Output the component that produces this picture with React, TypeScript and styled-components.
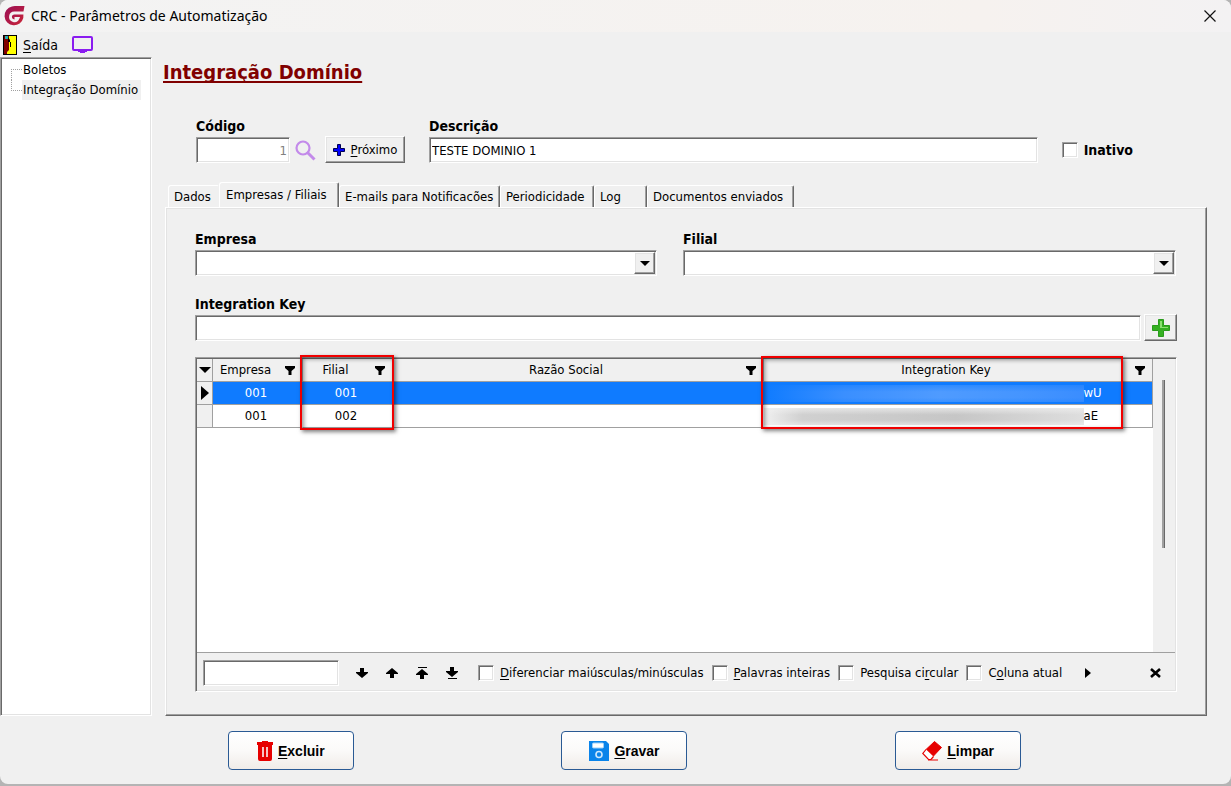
import React, { useId } from "react";
import styled, { createGlobalStyle, css } from "styled-components";

const GlobalStyle = createGlobalStyle`
  * { box-sizing: border-box; }
  html, body, #root { height: 100%; }
  body {
    margin: 0;
    background: #b4b4b4;
    color: #000;
    font-family: "DejaVu Sans Condensed", "DejaVu Sans", sans-serif;
    font-size: 13px;
    line-height: 20px;
  }
  input, button, select { font: inherit; color: inherit; margin: 0; }
  u { text-underline-offset: 2px; text-decoration-thickness: 1px; }
`;

const sunken = css`
  border: 1px solid;
  border-color: #a0a0a0 #fff #fff #a0a0a0;
  box-shadow: inset 1px 1px #696969, inset -1px -1px #e3e3e3;
`;

const raised = css`
  border: 1px solid;
  border-color: #fff #696969 #696969 #fff;
  box-shadow: inset -1px -1px #a0a0a0, inset 1px 1px #e3e3e3;
`;

const Desktop = styled.div`
  min-height: 100%;
  padding-bottom: 2px;
  display: flex;
  flex-direction: column;
`;

const Window = styled.div`
  flex: 1;
  display: flex;
  flex-direction: column;
  background: #f0f0f0;
  border-radius: 8px;
  overflow: hidden;
`;

const TitleBar = styled.header`
  display: flex;
  align-items: center;
  gap: 6px;
  height: 32px;
  padding: 0 15px 0 4px;
  background: linear-gradient(90deg, #f3f3f3, #f6f2ef 80%, #f3f2f3);
  font-family: "Noto Sans", sans-serif;
  font-size: 14px;
`;

const WindowTitle = styled.span`
  flex: 1;
`;

const PlainButton = styled.button`
  display: flex;
  align-items: center;
  justify-content: center;
  gap: 6px;
  padding: 0;
  border: 0;
  background: none;
`;

const MenuBar = styled.nav`
  display: flex;
  align-items: center;
  gap: 14px;
  height: 25px;
  padding: 0 3px;
  font-size: 14px;
`;

const Body = styled.div`
  flex: 1;
  display: flex;
`;

const Tree = styled.ul`
  ${sunken}
  width: 152px;
  margin: 0;
  padding: 2px 0 0 10px;
  list-style: none;
  background: #fff;
`;

const TreeItem = styled.li<{ $last?: boolean }>`
  display: flex;
  height: 20px;
  white-space: nowrap;
  &::before {
    content: "";
    width: 10px;
    height: 10px;
    border: 0 dotted #a0a0a0;
    border-left-width: 1px;
    ${(p) =>
      p.$last
        ? "border-bottom-width: 1px;"
        : "border-top-width: 1px; align-self: flex-end;"}
  }
`;

const TreeLabel = styled.span<{ $selected?: boolean }>`
  padding: 0 3px 0 1px;
  background: ${(p) => (p.$selected ? "#f0f0f0" : "none")};
`;

const Main = styled.main`
  flex: 1;
  min-width: 0;
  display: flex;
  flex-direction: column;
  padding: 0 24px 0 13px;
`;

const Heading = styled.h1`
  margin: 3px 0 0 -2px;
  color: #800000;
  font-size: 20px;
  line-height: 24px;
  text-decoration: underline;
  text-decoration-thickness: 2px;
  text-underline-offset: 2px;
  text-decoration-skip-ink: none;
`;

const RecordRow = styled.div`
  display: flex;
  align-items: flex-end;
  margin-top: 32px;
  padding: 0 74px 0 31px;
`;

const Field = styled.div`
  flex: 1;
  display: flex;
  flex-direction: column;
  gap: 1px;
  min-width: 0;
`;

const CodeField = styled(Field)`
  flex: 0 0 94px;
`;

const DescriptionField = styled(Field)`
  margin: 0 24px;
`;

const Label = styled.label`
  font-size: 14px;
  font-weight: bold;
`;

const TextBox = styled.input<{ $right?: boolean }>`
  ${sunken}
  width: 100%;
  height: 26px;
  padding: 0 2px;
  border-radius: 0;
  background: #fff;
  outline: 0;
  text-align: ${(p) => (p.$right ? "right" : "left")};
  color: ${(p) => (p.$right ? "#808080" : "#000")};
`;

const SearchButton = styled(PlainButton)`
  height: 26px;
  margin: 0 9px 0 5px;
`;

const BevelButton = styled.button<{ $width: number }>`
  ${raised}
  display: flex;
  align-items: center;
  justify-content: center;
  gap: 6px;
  width: ${(p) => p.$width}px;
  height: 27px;
  padding: 0;
  background: #f0f0f0;
`;

const CheckLabel = styled.label`
  display: flex;
  align-items: center;
  gap: 6px;
  white-space: nowrap;
`;

const InactiveLabel = styled(CheckLabel)`
  padding-bottom: 3px;
  font-size: 14px;
  font-weight: bold;
`;

const CheckBox = styled.input.attrs({ type: "checkbox" })`
  ${sunken}
  appearance: none;
  width: 16px;
  height: 16px;
  background: #fff;
`;

const TabStrip = styled.div`
  display: flex;
  align-items: flex-end;
  height: 26px;
  margin-top: 18px;
  padding-left: 3px;
`;

const Tab = styled.button<{ $width: number; $active?: boolean; $flat?: boolean }>`
  width: ${(p) => p.$width}px;
  height: ${(p) => (p.$active ? 25 : 22)}px;
  padding: 0 0 0 ${(p) => (p.$active ? 6 : 5)}px;
  border: 1px solid;
  border-color: #fff ${(p) => (p.$flat ? "#f0f0f0" : "#696969")} transparent #fff;
  border-bottom: 0;
  border-radius: 3px 2px 0 0;
  box-shadow: ${(p) => (p.$flat ? "none" : "inset -1px 0 #a0a0a0")};
  background: #f0f0f0;
  text-align: left;
  white-space: nowrap;
`;

const Panel = styled.section`
  ${raised}
  flex: 1;
  display: flex;
  flex-direction: column;
  padding: 21px 29px 23px 29px;
`;

const FieldPair = styled.div`
  display: grid;
  grid-template-columns: 462fr 493fr;
  gap: 26px;
  padding-right: 1px;
`;

const Combo = styled.div`
  ${sunken}
  display: grid;
  height: 26px;
  padding: 1px;
  background: #fff;
`;

const ComboSelect = styled.select`
  grid-area: 1 / 1;
  appearance: none;
  width: 100%;
  padding: 0 24px 0 2px;
  border: 0;
  outline: 0;
  background: none;
`;

const ComboArrow = styled.span`
  ${raised}
  grid-area: 1 / 1;
  justify-self: end;
  display: flex;
  align-items: center;
  justify-content: center;
  width: 21px;
  background: #f0f0f0;
  pointer-events: none;
`;

const KeyRow = styled.div`
  display: flex;
  align-items: flex-end;
  gap: 3px;
  margin-top: 18px;
`;

const GridBox = styled.div`
  ${sunken}
  flex: 1;
  display: flex;
  flex-direction: column;
  margin-top: 16px;
  padding: 1px;
`;

const GridBody = styled.div`
  flex: 1;
  display: flex;
`;

const GridArea = styled.div`
  flex: 1;
  min-width: 0;
  background: #fff;
`;

const ScrollTrack = styled.div`
  width: 22px;
  padding: 21px 0 0 9px;
`;

const ScrollThumb = styled.div`
  width: 3px;
  height: 168px;
  border-right: 1px solid #696969;
  background: #a0a0a0;
`;

const Table = styled.table`
  width: 100%;
  table-layout: fixed;
  border-collapse: separate;
  border-spacing: 0;
`;

const HeadCell = styled.th<{ $width?: number }>`
  position: relative;
  ${(p) => p.$width && `width: ${p.$width}px;`}
  height: 23px;
  padding: 0;
  border-right: 1px solid #a0a0a0;
  border-bottom: 1px solid #a0a0a0;
  background: #f0f0f0;
  font-weight: normal;
`;

const MarkerHeadCell = styled(HeadCell)`
  width: 16px;
  & > svg { display: block; margin: 0 auto; }
`;

const HeadContent = styled.div`
  display: flex;
  align-items: center;
  padding-right: 7px;
`;

const HeadText = styled.span`
  flex: 1;
  padding-right: 7px;
  text-align: center;
`;

const Row = styled.tr<{ $selected?: boolean }>`
  background: ${(p) => (p.$selected ? "#0f7bff" : "#fff")};
  color: ${(p) => (p.$selected ? "#fff" : "#000")};
`;

const Cell = styled.td`
  height: 23px;
  padding: 0 3px 0 0;
  border-bottom: 1px solid #a0a0a0;
  border-right: 1px solid transparent;
  text-align: center;
  &:last-child { border-right-color: #a0a0a0; }
`;

const MarkerCell = styled(Cell)`
  padding: 0;
  border-right-color: #a0a0a0;
  background: #f0f0f0;
  & > svg { display: block; margin: 0 auto; }
`;

const KeyValue = styled.div`
  display: flex;
  align-items: center;
`;

const Redaction = styled.span<{ $light?: boolean }>`
  width: 83%;
  height: 17px;
  background: ${(p) =>
    p.$light
      ? "linear-gradient(rgba(15,123,255,0.5), transparent 40% 75%, rgba(15,123,255,0.3)), linear-gradient(90deg, #0f7bff, #3a8fff 25%, #4f9bff 55%, #4595ff 80%, #3a8dff)"
      : "linear-gradient(rgba(240,240,240,0.7), transparent 40% 70%, rgba(240,240,240,0.6)), linear-gradient(90deg, #f0f0f0, #d0d0d0 12%, #c6c6c6 60%, #dedede)"};
`;

const Highlight = styled.span<{ $top: number; $right: number; $height: number }>`
  position: absolute;
  z-index: 1;
  top: ${(p) => p.$top}px;
  left: -3px;
  right: ${(p) => p.$right}px;
  height: ${(p) => p.$height}px;
  border: 2px solid #f00000;
  box-shadow: 2px 2px 4px rgba(0, 0, 0, 0.5), inset 2px 2px 4px rgba(0, 0, 0, 0.4);
  pointer-events: none;
`;

const SearchBar = styled.div`
  display: flex;
  align-items: center;
  height: 38px;
  padding: 2px 14px 0 6px;
  border-top: 1px solid #a0a0a0;
`;

const SearchInput = styled(TextBox)`
  width: 136px;
`;

const ArrowGroup = styled.div`
  display: flex;
  margin: 0 11px 0 8px;
`;

const ArrowButton = styled(PlainButton)`
  width: 30px;
  height: 24px;
`;

const MoreButton = styled(ArrowButton)`
  width: 36px;
`;

const Options = styled.div`
  display: flex;
  align-items: center;
  gap: 8px;
  flex: 1;
`;

const Footer = styled.footer`
  display: flex;
  justify-content: space-around;
  padding: 15px 106px 14px 124px;
`;

const ActionButton = styled.button`
  display: flex;
  align-items: center;
  justify-content: center;
  gap: 5px;
  width: 126px;
  height: 39px;
  padding: 0;
  border: 1px solid #2a5a94;
  border-radius: 4px;
  background: linear-gradient(#fff, #fbfaf9 50%, #f0ece8);
  font-family: "Liberation Sans", sans-serif;
  font-size: 14px;
  font-weight: bold;
`;

const FunnelIcon = () => (
  <svg width="10" height="9" viewBox="0 0 10 9">
    <path d="M0 0h10v2L6.500 5v4h-3V5L0 2z" />
  </svg>
);

const DownTriangle = ({ width = 10 }: { width?: number }) => (
  <svg width={width} height={width / 2} viewBox="0 0 10 5">
    <path d="M0 0h10L5 5z" />
  </svg>
);

const RightTriangle = ({ size }: { size: number }) => (
  <svg width={size / 2 + 1} height={size} viewBox="0 0 6 10" preserveAspectRatio="none">
    <path d="M0 0L6 5L0 10z" />
  </svg>
);

const LogoIcon = () => (
  <svg width="21" height="21" viewBox="0 0 21 21">
    <defs>
      <linearGradient id="logo" x1="0" y1="0" x2="1" y2="1">
        <stop offset="0" stopColor="#9a0f55" />
        <stop offset="0.6" stopColor="#b51c45" />
        <stop offset="1" stopColor="#cf2a35" />
      </linearGradient>
    </defs>
    <path d="M8 0.500Q9 0 11 0H20.500L19.500 5.500L19.300 12A9.500 9.500 0 1 1 8 0.500z" fill="url(#logo)" />
    <path d="M20 7H10.500A3.900 3.900 0 1 0 14 12.300H10.500" fill="none" stroke="#f3f1f2" strokeWidth="2.800" />
  </svg>
);

const DoorIcon = () => (
  <svg width="14" height="20" viewBox="0 0 14 20">
    <path d="M0 0h14v20H0z" />
    <path d="M1 1h5v18H1z" fill="#800000" />
    <path d="M2 1h3v3H2z" fill="#20b0b0" />
    <path d="M6 1h7v18H4v-2l2-2z" fill="#ffff00" />
    <path d="M7 7h1v5H7zM5 2l2 3v2H5z" />
  </svg>
);

const MonitorIcon = () => (
  <svg width="21" height="18" viewBox="0 0 21 18">
    <rect x="1" y="1" width="19" height="13" rx="1" fill="none" stroke="#8a1cf0" strokeWidth="2" />
    <path d="M6 14h9v2h-2v1H8v-1H6z" fill="#8a1cf0" />
  </svg>
);

const CloseIcon = () => (
  <svg width="12" height="12" viewBox="0 0 12 12">
    <path d="M0.500 0.500l11 11M11.500 0.500l-11 11" stroke="#111" strokeWidth="1.200" />
  </svg>
);

const MagnifierIcon = () => (
  <svg width="21" height="21" viewBox="0 0 21 21" fill="none" stroke="#c38aea">
    <circle cx="8" cy="8" r="6.500" strokeWidth="2.200" />
    <path d="M12.500 12.500L19.500 19.500" strokeWidth="3" />
  </svg>
);

const BluePlusIcon = () => (
  <svg width="12" height="12" viewBox="0 0 12 12">
    <path d="M4.500 0.500h3v4h4v3h-4v4h-3v-4h-4v-3h4z" fill="#0000ff" stroke="#000050" />
  </svg>
);

const GreenPlusIcon = () => (
  <svg width="18" height="18" viewBox="0 0 18 18">
    <path d="M6.500 0.500h5v6h6v5h-6v6h-5v-6h-6v-5h6z" fill="#35b022" stroke="#2a9c1c" />
    <path d="M8 2h2v6h6v1H8z" fill="#8be070" />
  </svg>
);

const TrashIcon = () => (
  <svg width="16" height="20" viewBox="0 0 16 20">
    <path d="M0 1h5V0h6v1h5v3H0zM1 4h14v14q0 2-2 2H3q-2 0-2-2z" fill="#e60000" />
    <path d="M5 6h2v10H5zM9 6h2v10H9z" fill="#f6c4c4" />
  </svg>
);

const DiskIcon = () => (
  <svg width="20" height="20" viewBox="0 0 20 20">
    <path d="M0 0h17l3 3v17H0z" fill="#0a84ea" />
    <rect x="3.500" y="2" width="11" height="5" rx="1" fill="#fff" stroke="#9fd0f8" />
    <circle cx="10" cy="13.500" r="3" fill="none" stroke="#cfe8fc" strokeWidth="1.600" />
  </svg>
);

const EraserIcon = () => (
  <svg width="20" height="20" viewBox="0 0 20 20">
    <path d="M12.500 0.500L19.500 6.500L11 15.500L4 8.500z" fill="#e60000" stroke="#e60000" />
    <path d="M4 8.500L0.800 12.500L6.500 18.500H9L11.500 15.500" fill="#fff" stroke="#e60000" strokeWidth="1.200" />
    <path d="M6 18.500h10v1H6z" fill="#e60000" />
  </svg>
);

const navigation = [
  { label: "Localizar próximo", path: "M4 2h4v4h4v1L6 12L0 7V6h4z" },
  { label: "Localizar anterior", path: "M4 12h4V8h4V7L6 2L0 7v1h4z" },
  { label: "Primeiro", path: "M4 13h4V9h4V8L6 3L0 8v1h4zM2 1h9v1H2z" },
  { label: "Último", path: "M4 1h4v4h4v1L6 11L0 6V5h4zM2 12h9v1H2z" },
];

const tabs = [
  { label: "Dados", width: 51, flat: true },
  { label: "Empresas / Filiais", width: 120, active: true },
  { label: "E-mails para Notificacões", width: 161 },
  { label: "Periodicidade", width: 94 },
  { label: "Log", width: 53 },
  { label: "Documentos enviados", width: 147 },
];

const rows = [
  { empresa: "001", filial: "001", key: "wU", selected: true },
  { empresa: "001", filial: "002", key: "aE", selected: false },
];

const searchOptions = [
  <><u>D</u>iferenciar maiúsculas/minúsculas</>,
  <><u>P</u>alavras inteiras</>,
  <>Pesquisa ci<u>r</u>cular</>,
  <>C<u>o</u>luna atual</>,
];

function ComboField({ label }: { label: string }) {
  const id = useId();
  return (
    <Field>
      <Label htmlFor={id}>{label}</Label>
      <Combo>
        <ComboSelect id={id} defaultValue="">
          <option value="" />
        </ComboSelect>
        <ComboArrow><DownTriangle /></ComboArrow>
      </Combo>
    </Field>
  );
}

function FilterHead({ label, width, children }: { label: string; width?: number; children?: React.ReactNode }) {
  return (
    <HeadCell $width={width}>
      <HeadContent>
        <HeadText>{label}</HeadText>
        <FunnelIcon />
      </HeadContent>
      {children}
    </HeadCell>
  );
}

function CompanyGrid() {
  return (
    <Table>
      <thead>
        <tr>
          <MarkerHeadCell><DownTriangle width={12} /></MarkerHeadCell>
          <FilterHead label="Empresa" width={90} />
          <FilterHead label="Filial" width={90}>
            <Highlight $top={-4} $right={-2} $height={75} />
          </FilterHead>
          <FilterHead label="Razão Social" width={371} />
          <FilterHead label="Integration Key">
            <Highlight $top={-3} $right={29} $height={73} />
          </FilterHead>
        </tr>
      </thead>
      <tbody>
        {rows.map((r) => (
          <Row key={r.filial} $selected={r.selected}>
            <MarkerCell>{r.selected && <RightTriangle size={14} />}</MarkerCell>
            <Cell>{r.empresa}</Cell>
            <Cell>{r.filial}</Cell>
            <Cell />
            <Cell>
              <KeyValue><Redaction $light={r.selected} />{r.key}</KeyValue>
            </Cell>
          </Row>
        ))}
      </tbody>
    </Table>
  );
}

function GridSearch() {
  return (
    <SearchBar>
      <SearchInput aria-label="Localizar" />
      <ArrowGroup>
        {navigation.map((n) => (
          <ArrowButton key={n.label} aria-label={n.label}>
            <svg width="12" height="14" viewBox="0 0 12 14"><path d={n.path} /></svg>
          </ArrowButton>
        ))}
      </ArrowGroup>
      <Options>
        {searchOptions.map((text, i) => (
          <CheckLabel key={i}><CheckBox /><span>{text}</span></CheckLabel>
        ))}
        <MoreButton aria-label="Mais"><RightTriangle size={10} /></MoreButton>
      </Options>
      <PlainButton aria-label="Fechar pesquisa">
        <svg width="11" height="10" viewBox="0 0 11 10">
          <path d="M1 1l9 8M10 1l-9 8" stroke="#000" strokeWidth="2.600" />
        </svg>
      </PlainButton>
    </SearchBar>
  );
}

export default function App() {
  return (
    <Desktop>
      <GlobalStyle />
      <Window>
        <TitleBar>
          <LogoIcon />
          <WindowTitle>CRC - Parâmetros de Automatização</WindowTitle>
          <PlainButton aria-label="Fechar"><CloseIcon /></PlainButton>
        </TitleBar>
        <MenuBar>
          <PlainButton><DoorIcon /><span><u>S</u>aída</span></PlainButton>
          <PlainButton aria-label="Monitor"><MonitorIcon /></PlainButton>
        </MenuBar>
        <Body>
          <Tree>
            <TreeItem><TreeLabel>Boletos</TreeLabel></TreeItem>
            <TreeItem $last><TreeLabel $selected>Integração Domínio</TreeLabel></TreeItem>
          </Tree>
          <Main>
            <Heading>Integração Domínio</Heading>
            <RecordRow>
              <CodeField>
                <Label htmlFor="codigo">Código</Label>
                <TextBox id="codigo" $right defaultValue="1" />
              </CodeField>
              <SearchButton aria-label="Pesquisar"><MagnifierIcon /></SearchButton>
              <BevelButton $width={80}><BluePlusIcon /><span><u>P</u>róximo</span></BevelButton>
              <DescriptionField>
                <Label htmlFor="descricao">Descrição</Label>
                <TextBox id="descricao" defaultValue="TESTE DOMINIO 1" />
              </DescriptionField>
              <InactiveLabel><CheckBox />Inativo</InactiveLabel>
            </RecordRow>
            <TabStrip role="tablist">
              {tabs.map((t) => (
                <Tab key={t.label} role="tab" aria-selected={!!t.active} $width={t.width} $active={t.active} $flat={t.flat}>
                  {t.label}
                </Tab>
              ))}
            </TabStrip>
            <Panel>
              <FieldPair>
                <ComboField label="Empresa" />
                <ComboField label="Filial" />
              </FieldPair>
              <KeyRow>
                <Field>
                  <Label htmlFor="chave">Integration Key</Label>
                  <TextBox id="chave" />
                </Field>
                <BevelButton $width={33} aria-label="Adicionar"><GreenPlusIcon /></BevelButton>
              </KeyRow>
              <GridBox>
                <GridBody>
                  <GridArea><CompanyGrid /></GridArea>
                  <ScrollTrack><ScrollThumb /></ScrollTrack>
                </GridBody>
                <GridSearch />
              </GridBox>
            </Panel>
          </Main>
        </Body>
        <Footer>
          <ActionButton><TrashIcon /><span><u>E</u>xcluir</span></ActionButton>
          <ActionButton><DiskIcon /><span><u>G</u>ravar</span></ActionButton>
          <ActionButton><EraserIcon /><span><u>L</u>impar</span></ActionButton>
        </Footer>
      </Window>
    </Desktop>
  );
}
